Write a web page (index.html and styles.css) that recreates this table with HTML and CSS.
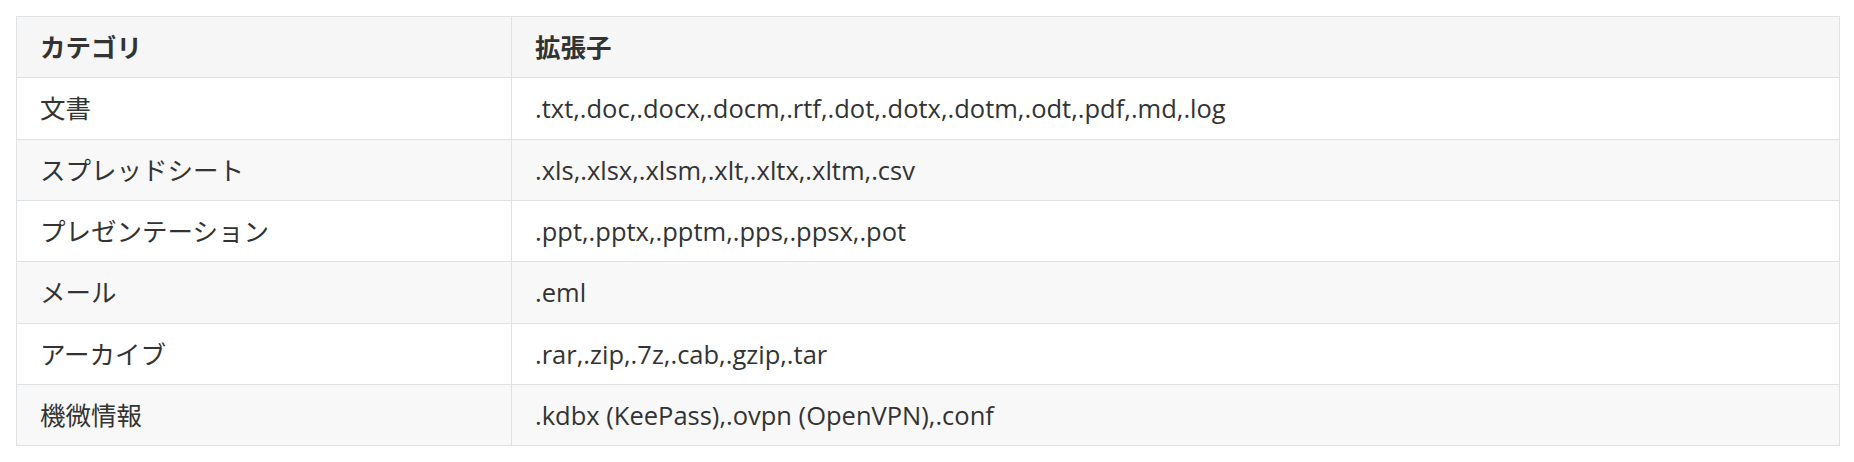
FILE: index.html
```html
<!DOCTYPE html>
<html lang="ja">
<head>
<meta charset="utf-8">
<link rel="stylesheet" href="styles.css">
</head>
<body>
<div class="page">
<table class="ext-table">
  <thead>
    <tr><th class="col-cat">カテゴリ</th><th>拡張子</th></tr>
  </thead>
  <tbody>
    <tr><td>文書</td><td>.txt,.doc,.docx,.docm,.rtf,.dot,.dotx,.dotm,.odt,.pdf,.md,.log</td></tr>
    <tr><td>スプレッドシート</td><td>.xls,.xlsx,.xlsm,.xlt,.xltx,.xltm,.csv</td></tr>
    <tr><td>プレゼンテーション</td><td>.ppt,.pptx,.pptm,.pps,.ppsx,.pot</td></tr>
    <tr><td>メール</td><td>.eml</td></tr>
    <tr><td>アーカイブ</td><td>.rar,.zip,.7z,.cab,.gzip,.tar</td></tr>
    <tr><td>機微情報</td><td>.kdbx (KeePass),.ovpn (OpenVPN),.conf</td></tr>
  </tbody>
</table>
</div>
</body>
</html>
```

FILE: styles.css
```css
html, body {
  margin: 0;
  padding: 0;
  background: #ffffff;
}
.page {
  padding: 16px 14px 16px 16px;
}
.ext-table {
  width: 1824px;
  border-collapse: collapse;
  font-family: "Open Sans", "Noto Sans CJK JP", sans-serif;
  font-size: 25.5px;
  color: #333333;
  table-layout: fixed;
}
.ext-table th,
.ext-table td {
  border: 1px solid #dfe2e5;
  text-align: left;
  padding: 0 23px;
  height: 61.33px;
  line-height: 34px;
  box-sizing: border-box;
}
.ext-table th {
  font-weight: 700;
  background: #f6f6f6;
}
.ext-table .col-cat {
  width: 495px;
}
.ext-table tbody tr:nth-child(even) td {
  background: #f8f8f8;
}
```
